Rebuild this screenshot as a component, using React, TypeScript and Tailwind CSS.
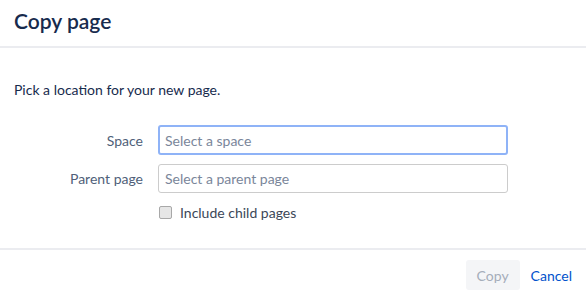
import { useState } from "react";

const font = { fontFamily: 'Lato, "Noto Sans", sans-serif' };

function FieldRow({
  label,
  placeholder,
  focused,
}: {
  label: string;
  placeholder: string;
  focused?: boolean;
}) {
  return (
    <div className="flex items-center">
      <label className="w-[144px] pr-[15px] text-right text-[14px] text-[#505f79]">
        {label}
      </label>
      <input
        placeholder={placeholder}
        className={`w-[350px] rounded-[3px] text-[14px] outline-none placeholder:text-[#7a869a] ${
          focused
            ? "h-[30px] border-2 border-[#8fb3f7] px-[5px]"
            : "h-[29px] border border-[#cccccc] px-[6px]"
        }`}
      />
    </div>
  );
}

export default function App() {
  const [includeChildren, setIncludeChildren] = useState(false);

  return (
    <div className="h-[298px] w-[586px] bg-white text-[#172b4d]" style={font}>
      <div className="flex h-[48px] items-center border-b-2 border-[#ebecf0] px-[14px]">
        <h2 className="pb-[5px] text-[21px] font-semibold leading-none">Copy page</h2>
      </div>

      <div className="px-[14px] pt-[31px]">
        <p className="text-[14px]">Pick a location for your new page.</p>

        <div className="mt-[25px] flex flex-col gap-[9px]">
          <FieldRow label="Space" placeholder="Select a space" focused />
          <FieldRow label="Parent page" placeholder="Select a parent page" />
        </div>

        <label className="mt-[9px] ml-[145px] flex items-center gap-[8px] text-[14px] text-[#3b4758]">
          <input
            type="checkbox"
            checked={includeChildren}
            onChange={() => setIncludeChildren(!includeChildren)}
            className="h-[13px] w-[13px] appearance-none rounded-[2px] border border-[#a8a8a8] bg-[#e6e6e6]"
          />
          Include child pages
        </label>
      </div>

      <div className="mt-[25px] flex items-center justify-end gap-[11px] border-t-2 border-[#ebecf0] px-[14px] pt-[10px]">
        <button className="h-[30px] w-[54px] rounded-[3px] bg-[#f4f5f7] text-[14px] text-[#a5adba]">
          Copy
        </button>
        <button className="text-[14px] text-[#0052cc]">Cancel</button>
      </div>
    </div>
  );
}
